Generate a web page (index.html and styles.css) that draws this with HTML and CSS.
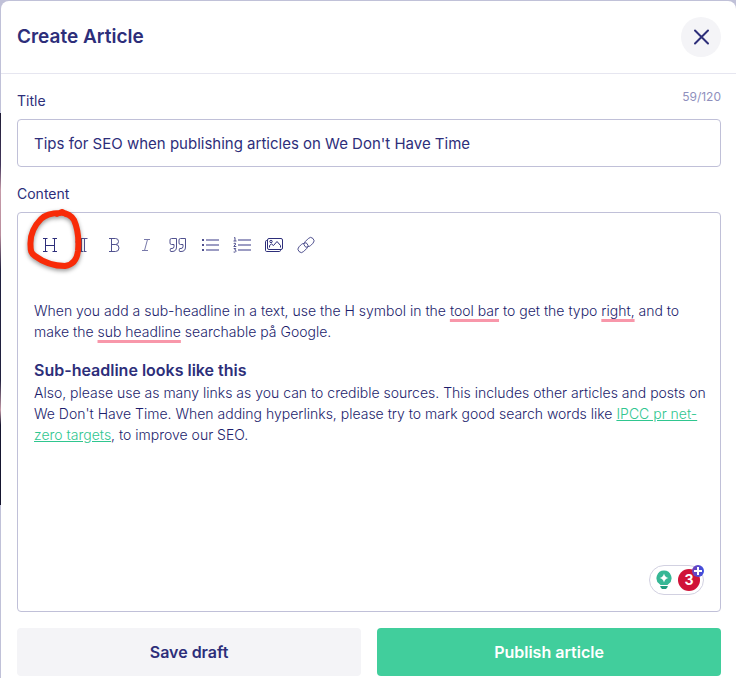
FILE: index.html
```
<!DOCTYPE html>
<html lang="en">
<head>
	<meta charset="UTF-8">
	<meta name="viewport" content="width=device-width, initial-scale=1">
	<title>Create Article</title>
	<link rel="stylesheet" href="styles.css">
</head>
<body>
	<main class="modal">
		<header class="modal_header">
			<h1>Create Article</h1>
			<button type="button" class="close" aria-label="Close">
				<svg width="18" height="18" viewBox="0 0 18 18"><path d="M3 2.500l13 13M16 2.500L3 15.500"/></svg>
			</button>
		</header>

		<form class="article_form">
			<div class="field_head">
				<label for="title">Title</label>
				<span class="counter">59/120</span>
			</div>
			<input type="text" id="title" class="title_input" value="Tips for SEO when publishing articles on We Don't Have Time">

			<div class="field_head content_head">
				<span id="content_label">Content</span>
			</div>
			<div class="editor">
				<!-- toolbar -->
				<div class="toolbar">
					<button type="button" class="active" aria-label="Heading">
						<svg width="20" height="20" viewBox="0 0 20 20"><path d="M3 3.500h4.500M12.500 3.500H17M3 16.500h4.500M12.500 16.500H17M5.500 3.500v13M14.500 3.500v13M5.500 10.500h9"/></svg>
						<svg class="marker" width="60" height="64" viewBox="0 0 60 64"><path d="M33 4C27 4 19 5 14 10C7 17 3 26 3.500 36C3.500 42 4 44 8 47C16 53 26 57 38 57C46 56 50 50 51 42C52 31 51 20 47 11C44 6 39 4 34 3.500M30 5L35 3L39 5"/></svg>
					</button>
					<button type="button" aria-label="Paragraph">
						<svg width="20" height="20" viewBox="0 0 20 20"><path d="M15.500 3.500H7.500a3.500 3.500 0 0 0 0 7H9M9.500 3.500v13M12.500 3.500v13M8 16.500h3M11.500 16.500h3M7 4v6M8.200 4v6"/></svg>
					</button>
					<button type="button" aria-label="Bold">
						<svg width="20" height="20" viewBox="0 0 20 20"><path d="M5 3.500h6.500a2.900 2.900 0 0 1 0 6H7M11.500 9.500a3.400 3.400 0 0 1 0 7H5M7.500 3.500v13"/></svg>
					</button>
					<button type="button" class="italic" aria-label="Italic">
						<svg width="20" height="20" viewBox="0 0 20 20"><path d="M8 4.500h6M6 15.500h6M11.500 4.500l-3 11"/></svg>
					</button>
					<button type="button" aria-label="Quote">
						<svg width="20" height="20" viewBox="0 0 20 20"><path d="M8.500 3.500H3.500q-1.500 0-1.500 1.500v3q0 1.500 1.500 1.500H6v2q0 2-2 2H3q-.7 0-.7.700v1.600q0 .7.700.7h1q4.500 0 4.500-4.500zM17.500 3.500h-5q-1.500 0-1.500 1.500v3q0 1.500 1.500 1.500H15v2q0 2-2 2h-1q-.7 0-.7.700v1.600q0 .7.700.7h1q4.500 0 4.500-4.500z"/></svg>
					</button>
					<button type="button" aria-label="Bulleted list">
						<svg width="20" height="20" viewBox="0 0 20 20"><path class="bullets" d="M2 5h2M2 10h2M2 15h2"/><path class="lines" d="M6 5h13M6 10h13M6 15h13"/></svg>
					</button>
					<button type="button" aria-label="Numbered list">
						<svg width="20" height="20" viewBox="0 0 20 20"><path class="numbers" d="M2 3l1-.5v3.500M1.500 6h3M1.700 8.500q2-1 2 .5L1.800 11.500h2.500M1.700 13.500h2L2.800 15q1.500 0 1.200 1.300T1.600 17"/><path class="lines" d="M6 5h13M6 10h13M6 15h13"/></svg>
					</button>
					<button type="button" class="picture" aria-label="Image">
						<svg width="20" height="20" viewBox="0 0 20 20"><rect x="3.500" y="3.500" width="15" height="11" rx="1.500"/><path d="M3.500 5.500H2.700q-1.200 0-1.200 1.200v8.600q0 1.200 1.200 1.200h12.600q1.200 0 1.200-1.200v-.8M5.500 12.500v-2l2-1.500 2 1.500 3.500-4 3.500 4v2"/><circle cx="7" cy="6.500" r="1.200"/></svg>
					</button>
					<button type="button" aria-label="Link">
						<svg width="20" height="20" viewBox="0 0 20 20"><path d="M9 11.500a3.300 3.300 0 0 1 0-4.700l3.300-3.300a3.300 3.300 0 0 1 4.700 4.700l-2.500 2.500M11 8.500a3.300 3.300 0 0 1 0 4.700l-3.300 3.300A3.300 3.300 0 0 1 3 11.800l2.500-2.500"/><path d="M9 11.500q1 .8 2 .7M11 8.500q-1-.8-2-.7M14.500 10.700q-1 1-3 .8M5.500 9.300q1-1 3-.8"/></svg>
					</button>
				</div>

				<!-- article text -->
				<div class="text" contenteditable="true" role="textbox" aria-multiline="true" aria-labelledby="content_label" spellcheck="false">
					<p>When you add a sub-headline in a text, use the H symbol in the <span class="typo">tool bar</span> to get the typo <span class="typo">right,</span> and to make the <span class="typo">sub headline</span> searchable på Google.</p>
					<h2>Sub-headline looks like this</h2>
					<p>Also, please use as many links as you can to credible sources. This includes other articles and posts on We Don't Have Time. When adding hyperlinks, please try to mark good search words like <a href="#">IPCC pr net-zero targets</a>, to improve our SEO.</p>
				</div>

				<div class="checker">
					<svg width="16" height="20" viewBox="0 0 16 20"><path fill="#36b795" d="M8 .5a7.500 7.500 0 0 1 4.500 13.500l-1 1h-7l-1-1A7.500 7.500 0 0 1 8 .5z"/><path fill="#fff" d="M8 3.500q.8 3.700 4.500 4.500-3.700.8-4.500 4.500Q7.200 8.800 3.500 8 7.200 7.200 8 3.500z"/><path fill="#209b7d" d="M4.300 16h7.400v1l-1.700 2H6l-1.700-2z"/></svg>
					<span class="errors">3</span>
					<svg class="plus" width="14" height="14" viewBox="0 0 14 14">
						<defs>
							<linearGradient id="plus_bg"><stop stop-color="#7440b8"/><stop offset="1" stop-color="#3b50e0"/></linearGradient>
						</defs>
						<circle cx="7" cy="7" r="6" fill="url(#plus_bg)"/>
						<path d="M7 3v8M3 7h8"/>
					</svg>
				</div>
			</div>

			<div class="actions">
				<button type="button" class="btn">Save draft</button>
				<button type="submit" class="btn btn_primary">Publish article</button>
			</div>
		</form>
	</main>
</body>
</html>
```
FILE: styles.css
```
* {
	box-sizing: border-box;
}
body {
	margin: 0;
	padding: 1px 0 0 1px;
	background: linear-gradient(#c0c1d8 113px, #1e1b35 113px, #43365c 165px, #c59aa8 190px, #b98d9d 235px, #20203f 270px, #20203f 380px, #c59aa8 410px, #15152f 425px, #15152f 505px, #c0c1d8 505px);
	font-family: Inter, "Liberation Sans", sans-serif;
	font-size: 14px;
	line-height: 21px;
	color: #2d2e7a;
}
button, input {
	font-family: inherit;
	color: inherit;
}
h1, h2, p {
	margin: 0;
}
.modal {
	min-height: calc(100vh - 1px);
	background: #fff;
	border-radius: 8px 8px 0 0;
}
.modal_header {
	display: flex;
	align-items: center;
	justify-content: space-between;
	padding: 16px 15px 16px 16px;
	border-bottom: 1px solid #e6e6f0;
}
.modal_header h1 {
	font-size: 19px;
	line-height: 26px;
	font-weight: 600;
}
.close {
	display: flex;
	align-items: center;
	justify-content: center;
	width: 40px;
	height: 40px;
	padding: 0;
	border: 0;
	border-radius: 50%;
	background: #f4f4f7;
}
svg {
	fill: none;
	stroke: currentColor;
}
.close svg {
	stroke-width: 2;
	stroke-linecap: round;
}

/* form */
.article_form {
	padding: 16px 15px 2px 16px;
}
.field_head {
	display: flex;
	justify-content: space-between;
	padding-bottom: 8px;
}
.counter {
	font-size: 12px;
	line-height: 14px;
	color: #8f90bd;
}
.title_input {
	display: block;
	width: 100%;
	height: 48px;
	padding: 0 16px;
	border: 1px solid #c0c0d8;
	border-radius: 4px;
	font-size: 15px;
}
.content_head {
	padding-top: 16px;
}
.editor {
	position: relative;
	min-height: 400px;
	padding: 16px 12px 16px 16px;
	border: 1px solid #c0c0d8;
	border-radius: 4px;
}
.toolbar {
	display: flex;
}
.toolbar button {
	position: relative;
	display: flex;
	align-items: center;
	justify-content: center;
	width: 32px;
	height: 32px;
	padding: 0;
	border: 0;
	background: none;
	color: #50518f;
}
.toolbar .active {
	color: #2d2e7a;
	z-index: 1;
}
.toolbar .picture {
	color: #2d2e7a;
}
.toolbar .italic {
	color: #7879aa;
}
.bullets {
	stroke-width: 2;
}
.lines {
	stroke: #9c9cc3;
	stroke-width: 2;
}
.toolbar .marker {
	position: absolute;
	left: -7px;
	top: -20px;
	stroke: #f82b08;
	stroke-width: 6;
	stroke-linecap: round;
	stroke-linejoin: round;
	filter: drop-shadow(0 2px 2px #0006);
	overflow: visible;
	pointer-events: none;
}
.text {
	padding-top: 39px;
	outline: 0;
	font-weight: 300;
	color: #1c1d6c;
}
.text h2 {
	margin-top: 16px;
	font-size: 16px;
	line-height: 24px;
	font-weight: 600;
	color: #2d2e7a;
}
.text a {
	color: #2fc68f;
}
.typo {
	text-decoration: underline 3px #f897aa;
	text-decoration-skip-ink: none;
	text-underline-offset: 3px;
}

/* spelling widget */
.checker {
	position: absolute;
	right: 16px;
	bottom: 16px;
	display: flex;
	align-items: center;
	gap: 6px;
	height: 30px;
	padding: 0 3px 0 6px;
	border: 1px solid #d2d1e1;
	border-radius: 15px;
	background: #fff;
}
.checker svg {
	stroke: none;
}
.errors {
	width: 22px;
	height: 22px;
	border-radius: 50%;
	background: #d01338;
	color: #fff;
	font-size: 14px;
	line-height: 22px;
	font-weight: 700;
	text-align: center;
}
.checker .plus {
	position: absolute;
	right: -2px;
	top: -2px;
	stroke-width: 2;
}
.plus path {
	stroke: #fff;
}
.actions {
	display: grid;
	grid-template-columns: 1fr 1fr;
	gap: 16px;
	padding-top: 16px;
}
.btn {
	height: 48px;
	border: 0;
	border-radius: 4px;
	background: #f4f4f7;
	font-size: 16px;
	font-weight: 600;
}
.btn_primary {
	background: #41ce9c;
	color: #fff;
}
```
